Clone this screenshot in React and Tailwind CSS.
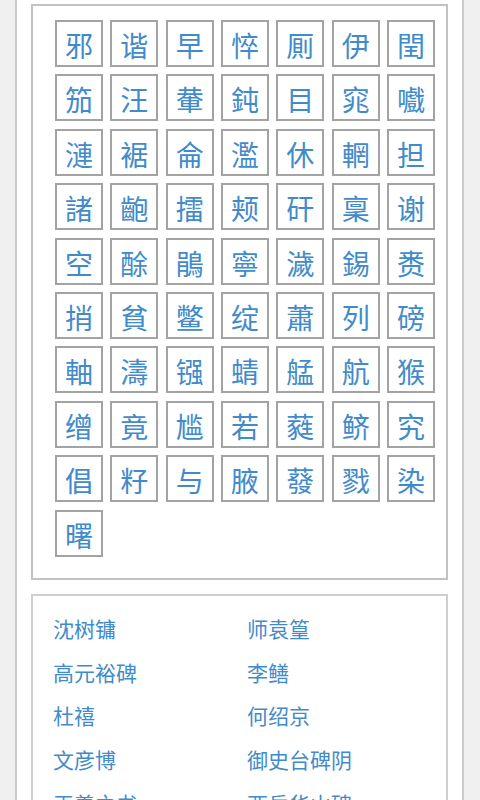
import React from "react";

const all =
  "邪谐早悴厠伊閏" +
  "笳汪輂鈍目窕嚱" +
  "漣裾侖濫休輞担" +
  "諸齙擂颊矸稟谢" +
  "空酴鵑寧濊錫赉" +
  "捎貧鳖绽蕭列磅" +
  "軸濤镪蜻艋航猴" +
  "缯竟尴若蕤鲚究" +
  "倡籽与腋蕟戮染" +
  "曙";

const names = [
  ["沈树镛", "师袁篁"],
  ["高元裕碑", "李鳝"],
  ["杜禧", "何绍京"],
  ["文彦博", "御史台碑阴"],
  ["王羲之书", "西岳华山碑"],
];

export default function App() {
  const cells = Array.from(all);
  return (
    <div
      className="min-h-[800px] bg-[#f0f0f0] pl-[15px]"
      style={{ fontFamily: '"Noto Sans CJK SC", "Noto Sans", sans-serif' }}
    >
      <div className="w-[449px] min-h-[820px] border-x-2 border-[#cbcbcb] bg-white pt-[4px] pl-[14px]">
        <div className="w-[417px] border-2 border-[#c2c2c2] pt-[14px] pb-[21px] pl-[22px]">
          <div className="grid grid-cols-[repeat(7,48px)] gap-x-[7.33px] gap-y-[7.4px]">
            {cells.map((c, i) => (
              <div
                key={i}
                className="flex h-[47px] w-[48px] items-center justify-center border-2 border-[#a3a3a3] pt-[3px] text-[28px] leading-none text-[#428bca]"
              >
                {c}
              </div>
            ))}
          </div>
        </div>
        <div className="mt-[14px] w-[417px] border-2 border-[#cfcfcf] pt-[11px] pl-[20px]">
          {names.map((row, i) => (
            <div key={i} className="grid grid-cols-[194px_1fr] h-[43.7px] items-center text-[21px] leading-none text-[#428bca]">
              <span>{row[0]}</span>
              <span>{row[1]}</span>
            </div>
          ))}
        </div>
      </div>
    </div>
  );
}
